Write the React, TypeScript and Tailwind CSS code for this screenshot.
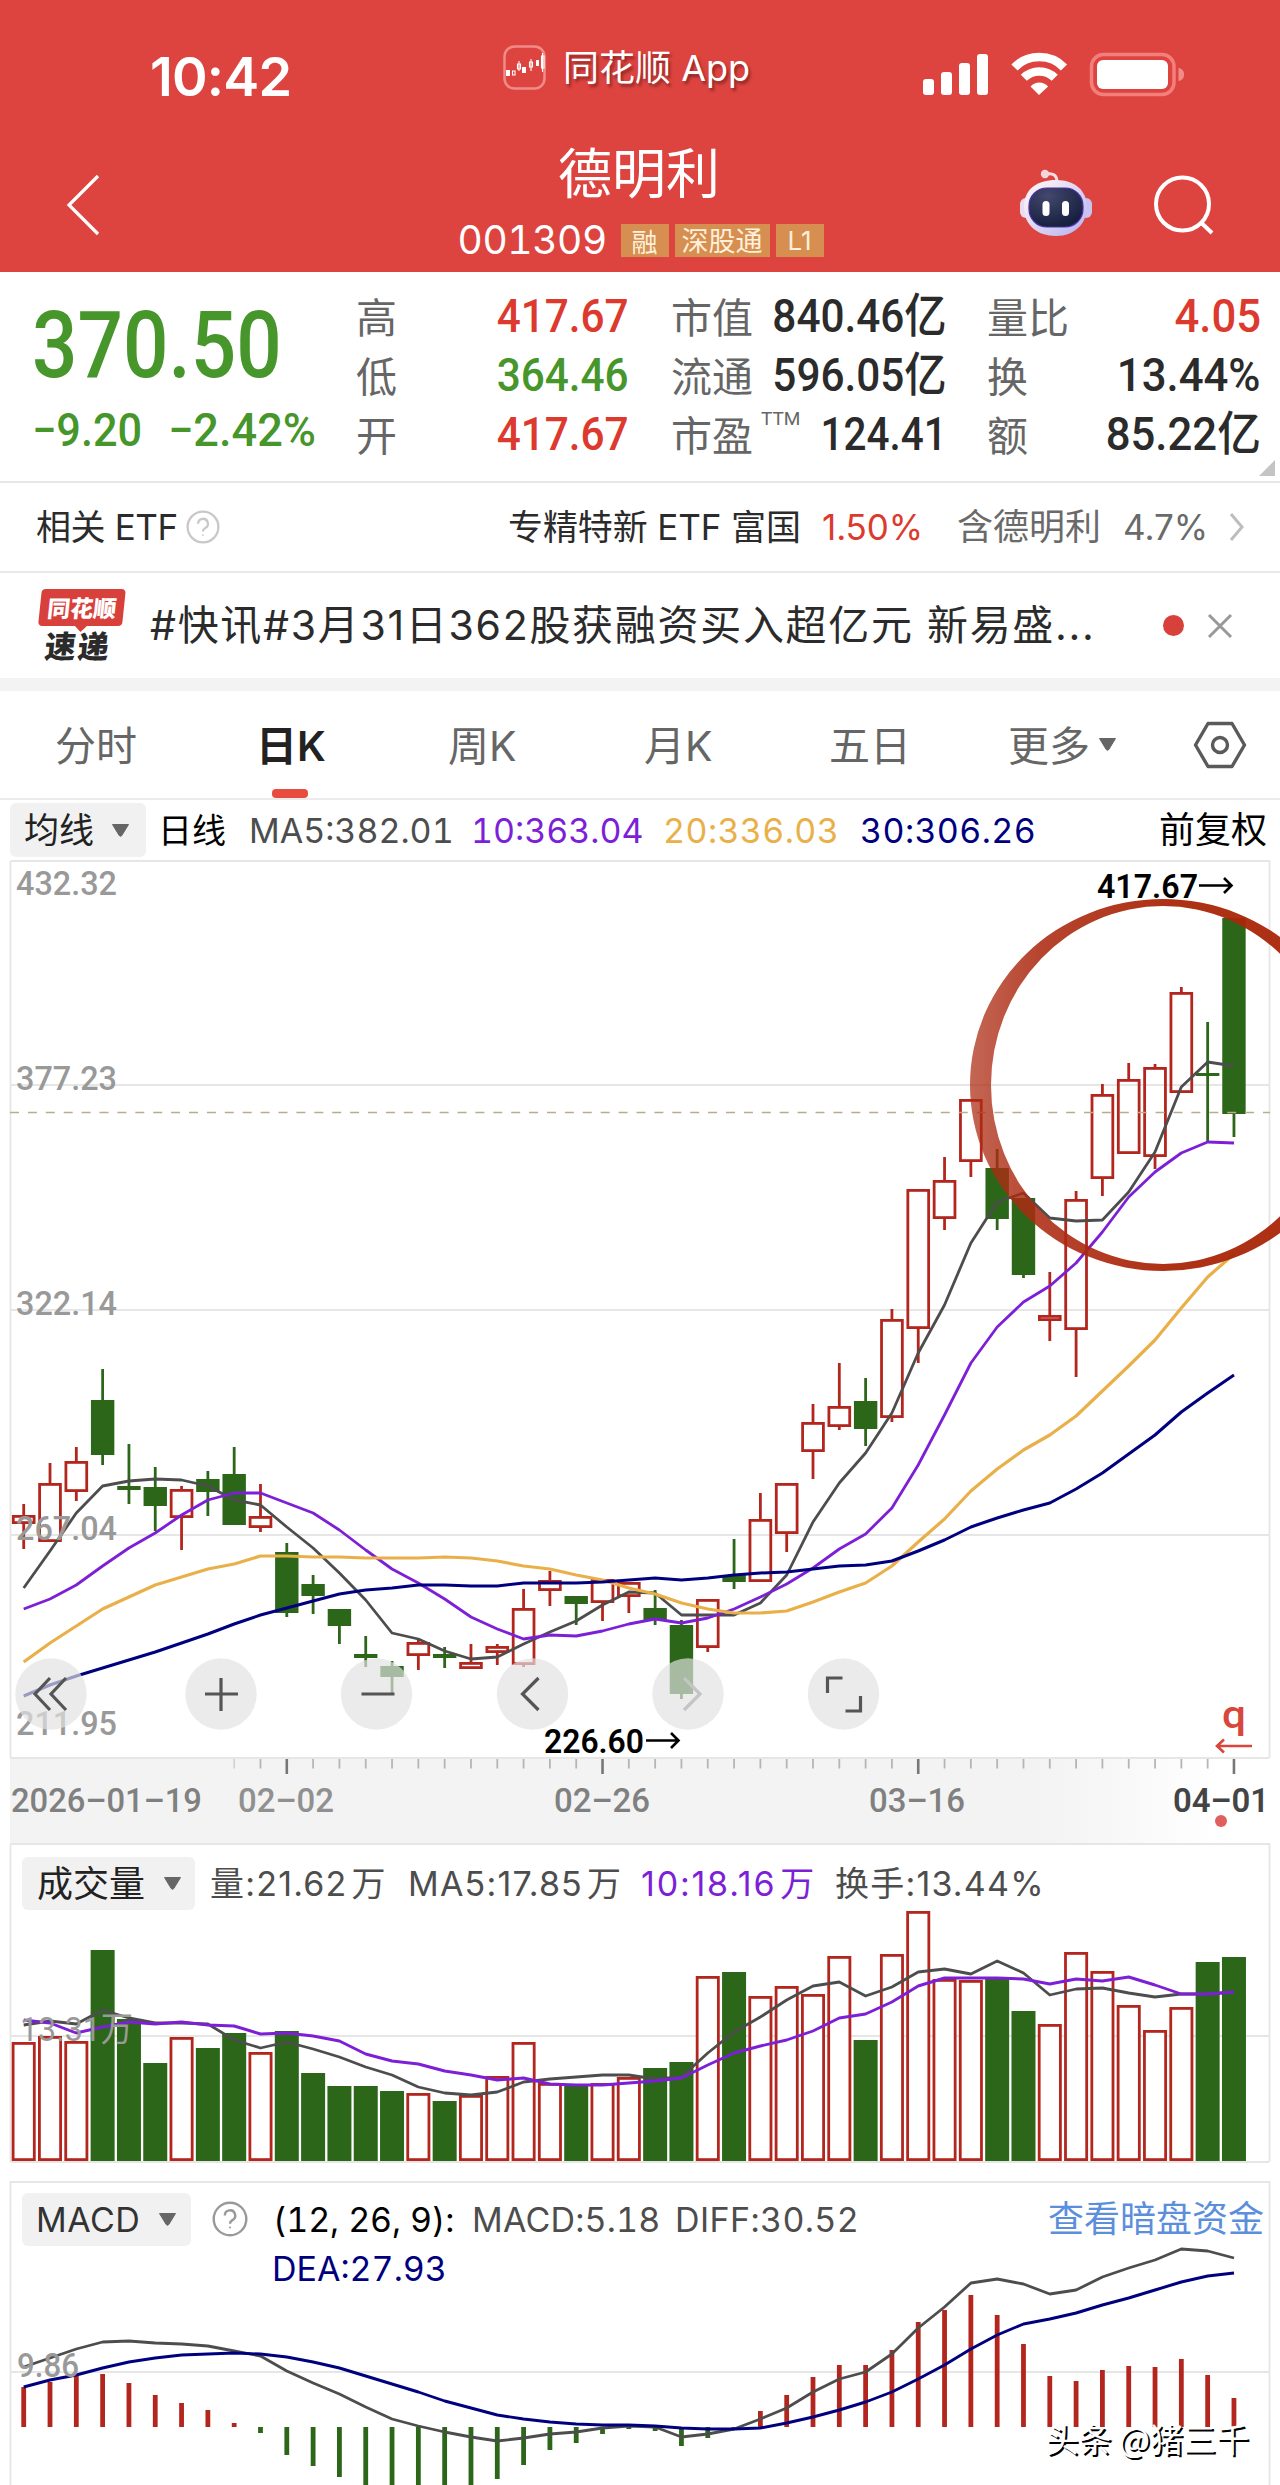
import React from 'react';

const CJK = "font-['Inter','Noto_Sans_CJK_SC',sans-serif]";
const NUM = "font-['Roboto','Noto_Sans_CJK_SC',sans-serif]";

const RED = '#b3261e';
const GREEN = '#2b6619';
const GRAY = '#4d4d4d';
const PURPLE = '#7d1fd6';
const YELLOW = '#e9b04a';
const NAVY = '#00007f';

// horizontal position of the n-th trading day
const dayX = (i: number) => 23.7 + i * 26.31;

const line = (ys: number[]) => ys.map((y, i) => `${dayX(i).toFixed(1)},${y}`).join(' ');

// [direction, high, body top, body bottom, low]
type Candle = ['u' | 'd', number, number, number, number];

const candles: Candle[] = [
    ['u', 1504, 1515, 1524, 1549], ['u', 1463, 1483, 1542, 1542], ['u', 1447, 1461, 1492, 1501],
    ['d', 1369, 1400, 1455, 1465], ['d', 1444, 1486, 1490, 1504], ['d', 1467, 1487, 1506, 1531],
    ['u', 1486, 1489, 1518, 1550], ['d', 1471, 1479, 1492, 1516], ['d', 1447, 1474, 1525, 1525],
    ['u', 1484, 1516, 1528, 1532], ['d', 1543, 1552, 1613, 1617], ['d', 1575, 1584, 1596, 1614],
    ['d', 1609, 1609, 1626, 1644], ['d', 1636, 1654, 1658, 1667], ['d', 1661, 1666, 1677, 1694],
    ['u', 1639, 1642, 1656, 1670], ['d', 1647, 1654, 1658, 1668], ['u', 1644, 1662, 1669, 1669],
    ['u', 1644, 1646, 1653, 1665], ['u', 1589, 1608, 1665, 1667], ['u', 1571, 1580, 1591, 1606],
    ['d', 1596, 1596, 1604, 1625], ['u', 1579, 1579, 1603, 1621], ['u', 1582, 1582, 1597, 1613],
    ['d', 1590, 1608, 1620, 1625], ['d', 1620, 1625, 1694, 1699], ['u', 1599, 1599, 1648, 1652],
    ['d', 1539, 1575, 1582, 1589], ['u', 1493, 1519, 1582, 1582], ['u', 1483, 1483, 1534, 1552],
    ['u', 1404, 1422, 1452, 1479], ['u', 1363, 1406, 1427, 1430], ['d', 1378, 1401, 1429, 1446],
    ['u', 1309, 1319, 1418, 1422], ['u', 1189, 1189, 1329, 1363], ['u', 1157, 1180, 1219, 1230],
    ['u', 1099, 1099, 1162, 1177], ['d', 1149, 1168, 1219, 1230], ['d', 1198, 1198, 1275, 1278],
    ['u', 1272, 1315, 1321, 1341], ['u', 1191, 1199, 1330, 1377], ['u', 1084, 1094, 1179, 1196],
    ['u', 1063, 1079, 1154, 1154], ['u', 1064, 1067, 1157, 1169], ['u', 987, 992, 1093, 1093],
    ['d', 1022, 1073, 1076, 1141], ['d', 918, 918, 1114, 1137],
];

const ma5 = [1588, 1551, 1513, 1486, 1481, 1479, 1480, 1486, 1500, 1505, 1527, 1548, 1573, 1600, 1633, 1639, 1651, 1659, 1657, 1644, 1632, 1621, 1605, 1592, 1593, 1615, 1615, 1615, 1603, 1575, 1522, 1483, 1453, 1413, 1353, 1305, 1243, 1202, 1193, 1218, 1221, 1220, 1192, 1152, 1087, 1062, 1066];
const ma10 = [1609, 1599, 1585, 1566, 1548, 1533, 1515, 1500, 1493, 1493, 1503, 1513, 1530, 1550, 1569, 1583, 1599, 1617, 1629, 1639, 1635, 1636, 1631, 1624, 1619, 1623, 1618, 1609, 1597, 1584, 1568, 1549, 1534, 1508, 1465, 1415, 1363, 1327, 1302, 1286, 1263, 1232, 1197, 1172, 1153, 1142, 1143];
const ma20 = [1662, 1643, 1626, 1609, 1597, 1585, 1577, 1569, 1564, 1556, 1556, 1557, 1557, 1558, 1558, 1558, 1557, 1558, 1561, 1566, 1569, 1575, 1580, 1588, 1594, 1603, 1609, 1613, 1613, 1611, 1602, 1592, 1583, 1566, 1542, 1519, 1491, 1469, 1450, 1435, 1416, 1391, 1366, 1340, 1308, 1277, 1254];
const ma30 = [1696, 1685, 1676, 1668, 1660, 1652, 1643, 1634, 1624, 1615, 1608, 1601, 1594, 1590, 1588, 1585, 1585, 1586, 1586, 1583, 1583, 1583, 1582, 1580, 1578, 1580, 1578, 1575, 1573, 1572, 1569, 1566, 1565, 1561, 1551, 1540, 1527, 1518, 1510, 1503, 1489, 1473, 1454, 1435, 1412, 1393, 1375];

// top edge of each volume bar, they all stand on VOL_BASE
const VOL_BASE = 2161;
const volumes = [2042, 2036, 2041, 1950, 2019, 2063, 2037, 2048, 2033, 2052, 2031, 2073, 2086, 2086, 2091, 2093, 2101, 2095, 2076, 2042, 2083, 2086, 2083, 2077, 2068, 2062, 1976, 1972, 1996, 1986, 1994, 1956, 2040, 1954, 1911, 1979, 1980, 1977, 2011, 2024, 1952, 1971, 2005, 2030, 2007, 1962, 1957];
const vol5 = [2025, 2021, 2024, 2010, 2018, 2023, 2023, 2024, 2040, 2048, 2042, 2049, 2057, 2067, 2075, 2087, 2093, 2095, 2092, 2082, 2079, 2077, 2075, 2075, 2079, 2077, 2053, 2032, 2017, 2000, 1986, 1982, 1996, 1987, 1972, 1969, 1974, 1961, 1973, 1995, 1989, 1988, 1993, 1997, 1994, 1994, 1992];
const vol10 = [2020, 2023, 2033, 2027, 2022, 2024, 2022, 2025, 2026, 2034, 2033, 2036, 2041, 2054, 2061, 2064, 2071, 2075, 2080, 2078, 2084, 2085, 2085, 2083, 2081, 2078, 2065, 2053, 2046, 2040, 2031, 2018, 2014, 2002, 1986, 1978, 1978, 1978, 1979, 1984, 1979, 1981, 1977, 1985, 1994, 1994, 1992];

const MACD_BASE = 2427;
const macd = [2387, 2382, 2375, 2374, 2383, 2395, 2403, 2410, 2423, 2433, 2455, 2466, 2477, 2490, 2490, 2490, 2490, 2486, 2479, 2465, 2450, 2443, 2434, 2429, 2431, 2446, 2438, 2429, 2411, 2395, 2377, 2365, 2365, 2350, 2322, 2310, 2295, 2315, 2344, 2376, 2381, 2370, 2366, 2367, 2359, 2375, 2398];
const diff = [2367, 2358, 2349, 2342, 2341, 2343, 2344, 2346, 2351, 2356, 2371, 2383, 2394, 2407, 2419, 2426, 2432, 2437, 2441, 2438, 2434, 2432, 2428, 2426, 2427, 2437, 2434, 2429, 2419, 2408, 2392, 2379, 2372, 2354, 2328, 2307, 2283, 2279, 2284, 2294, 2290, 2277, 2268, 2260, 2249, 2251, 2258];
const dea = [2387, 2380, 2375, 2368, 2362, 2358, 2355, 2354, 2353, 2354, 2357, 2362, 2368, 2376, 2384, 2392, 2401, 2408, 2415, 2419, 2422, 2424, 2425, 2425, 2426, 2428, 2429, 2429, 2428, 2423, 2417, 2410, 2402, 2392, 2379, 2365, 2349, 2335, 2324, 2319, 2313, 2305, 2298, 2290, 2282, 2276, 2273];

const Curve = ({ ys, color, width = 2.8 }: { ys: number[]; color: string; width?: number }) => (
    <polyline points={line(ys)} fill="none" stroke={color} strokeWidth={width} strokeLinejoin="round" />
);

interface LabelProps {
    x: number;
    y: number;
    w: number;
    size?: number;
    color?: string;
    weight?: number;
    children: string;
}

const Label = ({ x, y, w, size = 34, color = '#999', weight = 500, children }: LabelProps) => (
    <text x={x} y={y} textLength={w} lengthAdjust="spacingAndGlyphs" fontSize={size} fill={color} fontWeight={weight} className={NUM}>
        {children}
    </text>
);

const Triangle = ({ className = '' }: { className?: string }) => (
    <svg width="19" height="13" viewBox="0 0 19 13" className={className}>
        <path d="M1.500 0.500h16L10.800 11.500q-1.300 1.600-2.600 0z" fill="#666" stroke="#666" strokeWidth="1" />
    </svg>
);

const Help = ({ size, color }: { size: number; color: string }) => (
    <svg width={size} height={size} viewBox="0 0 36 36" fill="none" stroke={color} strokeWidth="2.4">
        <circle cx="18" cy="18" r="16.3" />
        <path d="M12.8 14.5a5.2 5.2 0 1 1 7.6 4.6c-1.8 1-2.4 1.8-2.4 3.6" />
        <circle cx="18" cy="26.6" r="1" fill={color} stroke="none" />
    </svg>
);

const StatusBar = () => (
    <div className="flex h-[136px] items-start text-white">
        <div className={`${CJK} ml-[150px] mt-[44px] w-[353px] text-[54px] font-semibold leading-[66px] tracking-[-0.8px]`}>10:42</div>
        <svg width="43" height="45" viewBox="0 0 43 45" className="mt-[45px]" fill="none">
            <rect x="1.5" y="1.5" width="40" height="42" rx="10" stroke="#f08c88" strokeWidth="2.5" />
            <path d="M3 25h4v6H3zM19 22h4v6h-4zM33 15h3v6h-3z" fill="#fff" />
            <path d="M9.500 26h2.500v4h-2.500zM14.500 19h3v5h-3zM26.500 17h3v5h-3zM28 14v12M38.500 11h2.500v12h-2.500zM39.500 8v19M16 16v10" stroke="#fff" strokeWidth="1.1" />
        </svg>
        <div className={`${CJK} ml-[17px] mt-[44px] w-[358px] whitespace-nowrap text-[36px] leading-[48px] [text-shadow:2px_3px_3px_rgba(90,20,20,0.6)]`}>
            同花顺 App
        </div>
        <svg width="264" height="50" viewBox="920 50 264 50" className="mt-[49px]">
            <g fill="#fff">
                <rect x="922" y="80" width="11" height="16" rx="3" />
                <rect x="940" y="73" width="11" height="23" rx="3" />
                <rect x="958" y="64" width="11" height="32" rx="3" />
                <rect x="976" y="55" width="11" height="41" rx="3" />
                <path d="M1038 96l-8.500-8.500c4.800-5.500 12.800-5.500 17.600 0z" />
            </g>
            <path d="M1013.500 68.500c13-14 36.500-14 49.500 0M1022.800 78.800c8.500-8.500 22.600-8.500 31 0" fill="none" stroke="#fff" strokeWidth="8.5" />
            <rect x="1090.500" y="55.500" width="82.500" height="40" rx="12" fill="none" stroke="#f37f7c" strokeWidth="3.5" />
            <rect x="1096" y="61" width="71" height="29" rx="6" fill="#fff" />
            <path d="M1177.500 69c7.500 1 7.500 12 0 13z" fill="#f08c88" />
        </svg>
    </div>
);

const Robot = () => (
    <svg width="74" height="70" viewBox="0 0 74 70">
        <defs>
            <linearGradient id="shell" x1="0" y1="0" x2="1" y2="1">
                <stop offset="0.2" stopColor="#f6eef5" />
                <stop offset="1" stopColor="#b3b0f0" />
            </linearGradient>
            <radialGradient id="visor" cx="0.35" cy="0.2" r="0.8">
                <stop offset="0" stopColor="#43486c" />
                <stop offset="1" stopColor="#171f3f" />
            </radialGradient>
        </defs>
        <rect x="1" y="29" width="12" height="20" rx="6" fill="#e8dcef" />
        <rect x="61" y="29" width="12" height="20" rx="6" fill="#c9c2f0" />
        <path d="M27 5q11-2 11 8" fill="none" stroke="#f6dfe2" strokeWidth="3" />
        <circle cx="26" cy="5" r="4.200" fill="#f3d5da" />
        <path d="M37 11C56 11 68 22 68 38S56 67 37 67 5 56 5 38 18 11 37 11z" fill="url(#shell)" />
        <rect x="10" y="19" width="54" height="39" rx="18" fill="url(#visor)" stroke="#4a2fa8" strokeWidth="1.2" />
        <rect x="23.500" y="32" width="7" height="15" rx="3.500" fill="#fff" />
        <rect x="43" y="32" width="7" height="15" rx="3.500" fill="#fff" />
    </svg>
);

const TitleBar = () => (
    <div className="flex h-[136px] text-white">
        <svg width="34" height="62" viewBox="0 0 34 62" className="ml-[66px] mt-[38px]" fill="none" stroke="#fff" strokeWidth="3.2">
            <path d="M32 2L3 31l29 29" />
        </svg>
        <div className="ml-[162px] flex w-[757px] flex-col items-center">
            <div className="h-[78px] whitespace-nowrap pr-[3px] font-['Noto_Sans_CJK_SC',sans-serif] text-[54px] leading-[70px]">德明利</div>
            <div className="flex h-[52px] items-center gap-[6px]">
                <span className={`${CJK} w-[157px] text-[39px] tabular-nums tracking-[-0.4px]`}>001309</span>
                <span className="flex h-[33px] w-[48px] items-center justify-center bg-[#d68f50] font-['Noto_Sans_CJK_SC',sans-serif] text-[26px] text-[#fff0dc]">融</span>
                <span className="flex h-[33px] w-[95px] items-center justify-center bg-[#d68f50] font-['Noto_Sans_CJK_SC',sans-serif] text-[27px] text-[#fff0dc]">深股通</span>
                <span className={`${CJK} flex h-[33px] w-[48px] items-center justify-center bg-[#d68f50] text-[26px] text-[#fff0dc]`}>L1</span>
            </div>
        </div>
        <div className="mt-[33px]">
            <Robot />
        </div>
        <svg width="62" height="62" viewBox="0 0 62 62" className="ml-[61px] mt-[38px]" fill="none" stroke="#fff" strokeWidth="4">
            <circle cx="28.500" cy="30" r="26.500" />
            <path d="M47 48.500L58 59" />
        </svg>
    </div>
);

const stats = [
    { rows: [['高', '417.67', 'text-[#dc3a2e]'], ['低', '364.46', 'text-[#46962c]'], ['开', '417.67', 'text-[#dc3a2e]']], box: 'ml-[356px] w-[273px]' },
    { rows: [['市值', '840.46亿', 'text-[#2b2b2b]'], ['流通', '596.05亿', 'text-[#2b2b2b]'], ['市盈', '124.41', 'text-[#2b2b2b]']], box: 'ml-[42px] w-[273px]' },
    { rows: [['量比', '4.05', 'text-[#dc3a2e]'], ['换', '13.44%', 'text-[#2b2b2b]'], ['额', '85.22亿', 'text-[#2b2b2b]']], box: 'ml-[43px] w-[274px]' },
];

const Quote = () => (
    <div className="relative flex h-[211px] border-b-2 border-[#e6e6e6]">
        <div className={`${NUM} absolute left-[32px] top-[24px] whitespace-nowrap font-medium text-[#46962c]`}>
            <div className="h-[100px] origin-left scale-x-[0.87] text-[92px] leading-[100px]">370.50</div>
            <div className="mt-[3px] flex h-[58px] text-[46px] leading-[62px]">
                <span className="w-[136px] origin-left scale-x-[0.94]">−9.20</span>
                <span className="origin-left scale-x-[0.98]">−2.42%</span>
            </div>
        </div>
        {stats.map((col, i) => (
            <div key={i} className={`${col.box} flex flex-col pt-[14px]`}>
                {col.rows.map(([name, value, tone]) => (
                    <div key={name} className="flex h-[59px] items-center justify-between whitespace-nowrap">
                        <span className="flex font-['Noto_Sans_CJK_SC',sans-serif] text-[41px] leading-[59px] text-[#666]">
                            {name}
                            {name === '市盈' && <sup className={`${NUM} top-0 ml-[8px] mt-[3px] text-[19px] leading-[24px]`}>TTM</sup>}
                        </span>
                        <span className={`${NUM} ${tone} origin-right text-[47px] font-medium leading-[59px] ${i === 2 ? 'scale-x-[0.93]' : name === '市盈' ? 'scale-x-[0.86]' : 'scale-x-[0.9]'}`}>{value}</span>
                    </div>
                ))}
            </div>
        ))}
        <svg width="16" height="16" viewBox="0 0 16 16" className="absolute bottom-[5px] right-[5px]">
            <path d="M16 0v16H0z" fill="#c4c4c4" />
        </svg>
    </div>
);

const EtfRow = () => (
    <div className={`${CJK} flex h-[90px] items-center whitespace-nowrap border-b-2 border-[#e9e9e9] text-[35px] text-[#2b2b2b]`}>
        <span className="ml-[36px] w-[150px] tracking-[-0.4px]">相关 ETF</span>
        <Help size={34} color="#c8c8c8" />
        <span className="ml-[288px] w-[314px] tracking-[-0.1px]">专精特新 ETF 富国</span>
        <span className="w-[135px] tracking-[-0.1px] text-[#dc3a2e]">1.50%</span>
        <span className="w-[166px] text-[36px] text-[#6a6a6a]">含德明利</span>
        <span className="w-[106px] text-[#6a6a6a]">4.7%</span>
        <svg width="16" height="30" viewBox="0 0 16 30" fill="none" stroke="#bdbdbd" strokeWidth="3">
            <path d="M2 2l11 13L2 28" />
        </svg>
    </div>
);

const NewsRow = () => (
    <div className="flex h-[106px] items-center border-b border-[#f3f3f3]">
        <div className="relative ml-[38px] h-[74px] w-[84px] -skew-x-6 font-['Noto_Sans_CJK_SC',sans-serif] font-black">
            <div className="flex h-[37px] items-center justify-center rounded-[4px] bg-[#d8403b] text-[23px] leading-none text-white">同花顺</div>
            <svg width="14" height="8" viewBox="0 0 14 8" className="absolute left-[36px] top-[36px]">
                <path d="M0 0h14L7 7z" fill="#d8403b" />
            </svg>
            <div className="mt-[4px] text-center text-[31px] leading-[30px] tracking-[2px] text-[#2b2b2b]">速递</div>
        </div>
        <span className={`${CJK} ml-[28px] w-[1013px] whitespace-nowrap text-[41px] tracking-[1.7px] text-[#2b2b2b]`}>
            #快讯#3月31日362股获融资买入超亿元 新易盛...
        </span>
        <span className="h-[21px] w-[21px] rounded-full bg-[#d8403b]"></span>
        <svg width="26" height="26" viewBox="0 0 26 26" className="ml-[23px]" fill="none" stroke="#999" strokeWidth="3">
            <path d="M2 2l22 22M24 2L2 24" />
        </svg>
    </div>
);

const tabs: [string, string][] = [
    ['分时', 'w-[201px]'], ['日K', 'w-[192px]'], ['周K', 'w-[196px]'], ['月K', 'w-[185px]'], ['五日', 'w-[179px]'], ['更多', 'w-[90px]'],
];

const Tabs = () => (
    <div className="flex h-[109px] items-center whitespace-nowrap border-b-2 border-[#ebebeb] pl-[55px]">
        {tabs.map(([name, width]) => (
            <div key={name} className={`${width} relative h-full`}>
                <span className={`${CJK} text-[41px] leading-[110px] ${name === '日K' ? 'font-semibold text-[#222]' : 'text-[#666]'}`}>{name}</span>
                {name === '日K' && <span className="absolute bottom-0 left-[16px] h-[9px] w-[36px] rounded-[4px] bg-[#e74c3f]"></span>}
            </div>
        ))}
        <Triangle />
        <svg width="54" height="48" viewBox="0 0 54 48" className="ml-[76px]" fill="none" stroke="#5a5a5a" strokeWidth="3.4" strokeLinejoin="round">
            <path d="M15 2.500h24L51.500 24 39 45.500H15L2.500 24z" />
            <circle cx="27" cy="24" r="7.500" />
        </svg>
    </div>
);

const MaLegend = () => (
    <div className={`${CJK} flex h-[60px] items-center whitespace-nowrap pl-[10px] text-[34px] tabular-nums text-[#222]`}>
        <span className="mr-[12px] flex h-[54px] w-[136px] items-center rounded-[6px] bg-[#f1f1f1] pl-[14px]">
            <span className="w-[87px] text-[35px]">均线</span>
            <Triangle />
        </span>
        <span className="w-[91px] text-black">日线</span>
        <span className="w-[222px] text-[#4d4d4d]">MA5:382.01</span>
        <span className="w-[192px] text-[#7d1fd6]">10:363.04</span>
        <span className="w-[197px] tracking-[0.4px] text-[#e9b04a]">20:336.03</span>
        <span className="w-[299px] tracking-[0.4px] text-[#00007f]">30:306.26</span>
        <span className="text-[36px] text-black">前复权</span>
    </div>
);

const buttons: [number, string, string][] = [
    [51, 'M-1 -16L-16 0l15 16M15 -16L0 0l15 16', '#555'],
    [221, 'M-16 0h33M0 -16v33', '#555'],
    [376.5, 'M-15 0h33', '#555'],
    [532.5, 'M6 -16L-10 0L6 16', '#555'],
    [688, 'M-4 -16L12 0L-4 16', '#c4c4c4'],
    [843.5, 'M-16 -1V-16H-1M17 2v15H2', '#555'],
];

const PriceChart = () => (
    <svg width="1280" height="983" viewBox="0 860 1280 983" className="block">
        <defs>
            <linearGradient id="axis" x1="0" x2="1" y1="0" y2="0">
                <stop offset="0" stopColor="#f3f3f3" />
                <stop offset="0.82" stopColor="#f3f3f3" />
                <stop offset="0.96" stopColor="#fff" />
            </linearGradient>
            <linearGradient id="marker" gradientUnits="userSpaceOnUse" x1="970" x2="1170" y1="0" y2="0">
                <stop offset="0" stopColor="#ac2b12" stopOpacity="0.72" />
                <stop offset="0.35" stopColor="#ac2b12" stopOpacity="0.88" />
                <stop offset="1" stopColor="#a92609" stopOpacity="0.95" />
            </linearGradient>
        </defs>
        <rect x="10" y="1758" width="1260" height="85" fill="url(#axis)" />
        <path d="M10.500 861H1269.500V1758M10.500 861V1758M10.500 1085H1269M10.500 1310H1269M10.500 1535H1269M10.500 1758H1269" fill="none" stroke="#e6e6e6" strokeWidth="1.800" />

        {candles.map(([dir, high, top, bottom, low], i) => {
            const x = dayX(i);
            const color = dir === 'u' ? RED : GREEN;
            return (
                <g key={i} stroke={color} strokeWidth="2.8">
                    {high < top && <path d={`M${x} ${high}V${top}`} />}
                    {low > bottom && <path d={`M${x} ${bottom}V${low}`} />}
                    {dir === 'u' ? (
                        <rect x={x - 10.4} y={top + 1.4} width="20.8" height={bottom - top - 2.8} fill="none" />
                    ) : (
                        <rect x={x - 11.7} y={top} width="23.4" height={bottom - top} fill={color} stroke="none" />
                    )}
                </g>
            );
        })}
        <path d="M10 1112.500H1270" stroke="#b8ad88" strokeWidth="1.700" strokeDasharray="9 8.900" />
        <Curve ys={ma5} color={GRAY} />
        <Curve ys={ma10} color={PURPLE} />
        <Curve ys={ma20} color={YELLOW} width={3.2} />
        <Curve ys={ma30} color={NAVY} width={3} />

        <Label x={16} y={895} w={101}>432.32</Label>
        <Label x={16} y={1090} w={101}>377.23</Label>
        <Label x={16} y={1315} w={101}>322.14</Label>
        <Label x={16} y={1540} w={101}>267.04</Label>
        <Label x={16} y={1735} w={101}>211.95</Label>
        <Label x={1097} y={898} w={101} color="#000" weight={600}>417.67</Label>
        <path d="M1199 885.500h32M1224 878l7.500 7.500l-7.500 7.500" fill="none" stroke="#000" strokeWidth="2.600" />
        <Label x={544} y={1753} w={100} color="#000" weight={600}>226.60</Label>
        <path d="M646 1740.500h32M671 1733l7.500 7.500l-7.500 7.500" fill="none" stroke="#000" strokeWidth="2.600" />
        <Label x={1222} y={1728} w={24} size={39} color="#d8463c">q</Label>
        <path d="M1252 1746h-34M1224 1739.500l-7 6.500l7 6.500" fill="none" stroke="#d8463c" strokeWidth="2.600" />

        {/* red pen mark round the latest sessions */}
        <path
            d="M970 1085a193 186 0 1 1 386 0a193 186 0 1 1 -386 0zM991 1085a172 179 0 1 0 344 0a172 179 0 1 0 -344 0z"
            fill="url(#marker)"
            fillRule="evenodd"
        />

        {buttons.map(([x, d, color]) => (
            <g key={x} transform={`translate(${x} 1694)`}>
                <circle r="35.700" fill="#e2e2e2" fillOpacity="0.684" />
                <path d={d} fill="none" stroke={color} strokeWidth="3.2" />
            </g>
        ))}

        {candles.map((_, i) => {
            if (i < 8) return null;
            const major = (i - 10) % 12 === 0;
            return (
                <path
                    key={i}
                    d={`M${dayX(i)} 1759V${major ? 1774 : 1768.5}`}
                    stroke={major ? '#777' : '#b5b5b5'}
                    strokeWidth={major ? 2.6 : 1.8}
                    opacity={i === 8 ? 0.5 : 1}
                />
            );
        })}
        <Label x={11} y={1812} w={191} color="#808080">2026–01–19</Label>
        <Label x={238} y={1812} w={96} color="#909090">02–02</Label>
        <Label x={554} y={1812} w={96} color="#808080">02–26</Label>
        <Label x={869} y={1812} w={96} color="#808080">03–16</Label>
        <Label x={1173} y={1812} w={96} color="#444" weight={600}>04–01</Label>
        <circle cx="1221" cy="1821" r="6" fill="#e0605e" />
    </svg>
);

const VolumePane = () => (
    <div className="relative h-[338px]">
        <svg width="1280" height="338" viewBox="0 1843 1280 338" className="absolute inset-0">
            <path d="M10.500 1844H1269.500V2162M10.500 1844V2162M10.500 2036H1269M10.500 2162H1269" fill="none" stroke="#e6e6e6" strokeWidth="1.800" />
            {volumes.map((top, i) =>
                candles[i][0] === 'u' ? (
                    <rect key={i} x={dayX(i) - 10.6} y={top + 1.4} width="21.2" height={VOL_BASE - top - 2.8} fill="#fff" stroke={RED} strokeWidth="2.8" />
                ) : (
                    <rect key={i} x={dayX(i) - 12} y={top} width="24" height={VOL_BASE - top} fill={GREEN} />
                ),
            )}
            <Curve ys={vol5} color={GRAY} />
            <Curve ys={vol10} color={PURPLE} width={2.9} />
            <Label x={20} y={2041} w={113} weight={400}>13.31万</Label>
        </svg>
        <div className={`${CJK} relative flex items-center whitespace-nowrap pl-[22px] pt-[14px] text-[34px] tracking-[1.2px] text-[#4d4d4d]`}>
            <span className="mr-[15px] flex h-[53px] w-[173px] items-center rounded-[6px] bg-[#f1f1f1] pl-[15px] tracking-normal text-[#222]">
                <span className="w-[126px] text-[36px]">成交量</span>
                <Triangle />
            </span>
            <span className="w-[198px]">量:21.62<span className="ml-[4px]">万</span></span>
            <span className="w-[233px]">MA5:17.85<span className="ml-[4px]">万</span></span>
            <span className="w-[194px] tracking-[1.8px] text-[#7d1fd6]">10:18.16<span className="ml-[4px]">万</span></span>
            <span>换手:13.44%</span>
        </div>
    </div>
);

const MacdPane = () => (
    <div className="relative h-[304px]">
        <svg width="1280" height="304" viewBox="0 2181 1280 304" className="absolute inset-0">
            <path d="M10.500 2490V2182H1269.500V2490M10.500 2372H1269" fill="none" stroke="#e6e6e6" strokeWidth="1.800" />
            {macd.map((y, i) => (
                <path key={i} d={`M${dayX(i)} ${MACD_BASE}V${y}`} stroke={y < MACD_BASE ? RED : GREEN} strokeWidth="4.8" />
            ))}
            <Curve ys={diff} color={GRAY} />
            <Curve ys={dea} color={NAVY} width={2.9} />
            <Label x={17} y={2377} w={62}>9.86</Label>
        </svg>
        <div className={`${CJK} relative flex items-center whitespace-nowrap pl-[22px] pt-[11px] text-[34px] tabular-nums tracking-[0.2px] text-[#4d4d4d]`}>
            <span className="mr-[21px] flex h-[53px] w-[169px] items-center rounded-[6px] bg-[#f1f1f1] pl-[14px] text-[#333]">
                <span className="w-[122px] tracking-[0.5px]">MACD</span>
                <Triangle />
            </span>
            <Help size={36} color="#999" />
            <span className="ml-[25px] w-[199px] tracking-[-0.1px] text-black">(12, 26, 9):</span>
            <span className="w-[203px]">MACD:5.18</span>
            <span className="w-[373px] tracking-[0.4px]">DIFF:30.52</span>
            <span className="text-[36px] tracking-normal text-[#5b8fdc]">查看暗盘资金</span>
        </div>
        <div className={`${CJK} relative pl-[272px] text-[34px] tabular-nums leading-[46px] text-[#00007f]`}>DEA:27.93</div>
        <div className="absolute bottom-[25px] right-[31px] whitespace-nowrap font-['Noto_Sans_CJK_SC',sans-serif] text-[33px] leading-[44px] text-white [text-shadow:2px_2px_0_#000]">
            头条 @猪三千
        </div>
    </div>
);

export default function App() {
    return (
        <div className="flex h-[2485px] w-[1280px] flex-col overflow-hidden bg-white">
            <header className="h-[272px] shrink-0 bg-[#dd4440]">
                <StatusBar />
                <TitleBar />
            </header>
            <Quote />
            <EtfRow />
            <NewsRow />
            <div className="h-[12px] shrink-0 bg-[#f3f3f3]"></div>
            <Tabs />
            <MaLegend />
            <PriceChart />
            <VolumePane />
            <MacdPane />
        </div>
    );
}
